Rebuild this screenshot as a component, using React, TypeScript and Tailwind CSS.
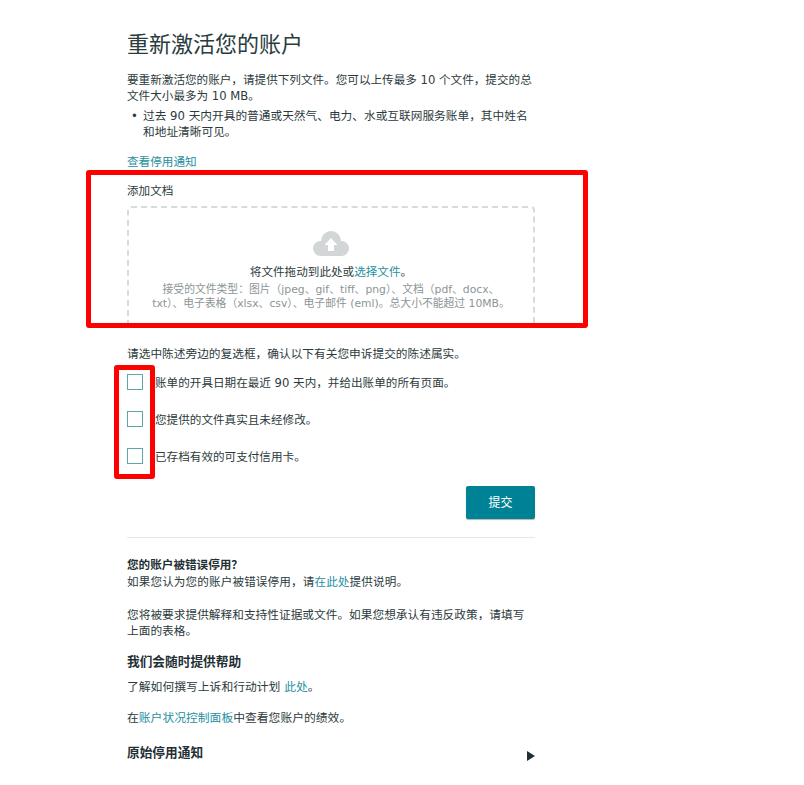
import { Fragment } from "react";

const font = "font-['DejaVu_Sans','Noto_Sans_CJK_SC',sans-serif]";
const link = "text-[#26909e]";

const statements = [
  "账单的开具日期在最近 90 天内，并给出账单的所有页面。",
  "您提供的文件真实且未经修改。",
  "已存档有效的可支付信用卡。",
];

function CloudIcon() {
  return (
    <svg width="36" height="26" viewBox="0 0 36 26" className="mx-auto block">
      <g fill="#d3d6d6">
        <circle cx="7.5" cy="17.5" r="7.5" />
        <circle cx="18" cy="10" r="10" />
        <circle cx="28.5" cy="17.5" r="7.5" />
        <rect x="7" y="14" width="22" height="11" />
      </g>
      <path d="M18 7l6.500 7H21v6h-6v-6h-3.500z" fill="#fff" />
    </svg>
  );
}

export default function App() {
  return (
    <div className={`relative h-[785px] w-[804px] overflow-hidden bg-white pl-[127px] pt-[31px] text-[11.6px] leading-[16px] text-[#2c3a3c] ${font}`}>
      <div className="flex w-[408px] flex-col">
        <h1 className="text-[22px] leading-[28px] text-[#2a3c3e]">重新激活您的账户</h1>

        <p className="mt-[13px] whitespace-nowrap">
          要重新激活您的账户，请提供下列文件。您可以上传最多 10 个文件，提交的总
          <br />
          文件大小最多为 10 MB。
        </p>
        <div className="mt-[4px] flex">
          <span className="w-[16px] pl-[4px]">•</span>
          <p className="whitespace-nowrap text-[11.7px]">
            过去 90 天内开具的普通或天然气、电力、水或互联网服务账单，其中姓名
            <br />
            和地址清晰可见。
          </p>
        </div>

        <a className={`mt-[14px] ${link}`}>查看停用通知</a>

        <div className="mt-[13px]">添加文档</div>

        {/* 上传区域, 底部被截断 */}
        <div className="mt-[7px] h-[118px] rounded-t-[4px] border-2 border-b-0 border-dashed border-[#d8dbdb] pt-[23px] text-center">
          <CloudIcon />
          <div className="mt-[7px]">
            将文件拖动到此处或<a className={link}>选择文件</a>。
          </div>
          <div className="mt-[3px] whitespace-nowrap text-[10.8px] leading-[14px] text-[#8c9596]">
            接受的文件类型：图片（jpeg、gif、tiff、png）、文档（pdf、docx、
            <br />
            txt）、电子表格（xlsx、csv）、电子邮件 (eml)。总大小不能超过 10MB。
          </div>
        </div>

        <p className="mt-[22px] text-[11.7px]">请选中陈述旁边的复选框，确认以下有关您申诉提交的陈述属实。</p>

        <div className="mt-[12px] flex flex-col gap-[21px]">
          {statements.map((text) => (
            <label key={text} className="flex h-[16px] items-center gap-[12px]">
              <span className="h-[16px] w-[16px] shrink-0 border border-[#5fa5ad] bg-white" />
              <span className="pt-px">{text}</span>
            </label>
          ))}
        </div>

        <button className="mt-[22px] h-[33px] w-[69px] self-end rounded-[2px] bg-[#008296] text-[12px] text-white shadow-[0_1px_1px_rgba(0,0,0,0.3)]">
          提交
        </button>

        <div className="mt-[18px] h-px bg-[#e7e9e9]" />

        <div className="mt-[19px] font-bold text-[#1f3034]">您的账户被错误停用？</div>
        <p className="mt-px tracking-[0.12px]">
          如果您认为您的账户被错误停用，请<a className={link}>在此处</a>提供说明。
        </p>
        <p className="mt-[17px] whitespace-nowrap text-[11.7px]">
          {["您将被要求提供解释和支持性证据或文件。如果您想承认有违反政策，请填写", "上面的表格。"].map((line, i) => (
            <Fragment key={line}>
              {i > 0 && <br />}
              {line}
            </Fragment>
          ))}
        </p>

        <h3 className="mt-[15px] text-[12.7px] font-bold text-[#1f3034]">我们会随时提供帮助</h3>
        <p className="mt-[9px] text-[11.8px]">
          了解如何撰写上诉和行动计划 <a className={link}>此处</a>。
        </p>
        <p className="mt-[15px] text-[11.8px]">
          在<a className={link}>账户状况控制面板</a>中查看您账户的绩效。
        </p>

        <div className="mt-[19px] flex items-center justify-between">
          <h3 className="text-[12.7px] font-bold text-[#1f3034]">原始停用通知</h3>
          <svg width="8" height="10" viewBox="0 0 8 10" className="mt-[6px]">
            <path d="M0 0l8 5-8 5z" fill="#1f3034" />
          </svg>
        </div>
      </div>

      {/* 红色标注框 */}
      <div className="absolute left-[86px] top-[170px] h-[158px] w-[502px] rounded-[3px] border-[5px] border-[#ff0000]" />
      <div className="absolute left-[114px] top-[365px] h-[114px] w-[41px] rounded-[3px] border-[5px] border-[#ff0000]" />
    </div>
  );
}
